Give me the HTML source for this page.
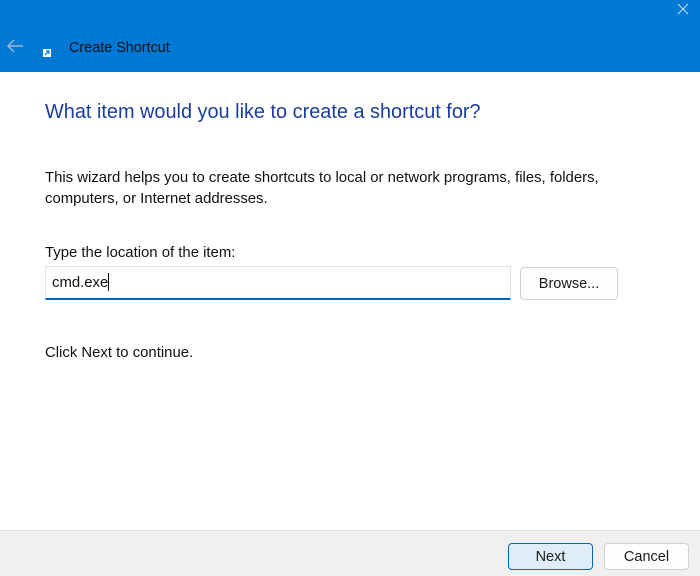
<!DOCTYPE html>
<html><head><style>
body{margin:0;width:700px;height:575px;position:relative;overflow:hidden;background:#fff;font-family:"Liberation Sans",sans-serif;}
.hdr{position:absolute;left:0;top:0;width:700px;height:72px;background:#0078d4;}
.t{position:absolute;white-space:nowrap;}
.foot{position:absolute;left:0;top:530px;width:700px;height:45px;background:#f0f0f0;border-top:1px solid #dfdfdf;}
.btn{position:absolute;box-sizing:border-box;border:1px solid #d0d0d0;border-radius:4px;background:#fdfdfd;font-size:14.5px;text-align:center;color:#1a1a1a;}
</style></head><body>
<div class="hdr">
<svg style="position:absolute;left:676px;top:2px" width="14" height="14"><path d="M2 2L12 12M12 2L2 12" stroke="#cfe3f5" stroke-width="1"/></svg>
<svg style="position:absolute;left:6px;top:38px" width="18" height="16"><path d="M17 8H2M8 2L2 8L8 14" stroke="#9ab7d3" stroke-width="1.5" fill="none"/></svg>
<div style="position:absolute;left:43px;top:49px;width:8px;height:8px;background:#fff;"><svg width="8" height="8" style="position:absolute"><path d="M2 6L6 2M3 2H6V5" stroke="#0078d4" stroke-width="1.2" fill="none"/></svg></div>
<div class="t" style="left:69px;top:40px;font-size:14.4px;color:#111;">Create Shortcut</div>
</div>
<div class="t" style="left:45px;top:101px;font-size:19.9px;color:#1b3e9a;">What item would you like to create a shortcut for?</div>
<div class="t" style="left:45px;top:168px;font-size:14.9px;color:#111;line-height:21px;">This wizard helps you to create shortcuts to local or network programs, files, folders,<br>computers, or Internet addresses.</div>
<div class="t" style="left:45px;top:245px;font-size:14.9px;color:#111;">Type the location of the item:</div>
<div style="position:absolute;left:45px;top:266px;width:466px;height:34px;box-sizing:border-box;border:1px solid #e3e3e3;border-bottom:2px solid #0067c0;"></div>
<div class="t" style="left:52px;top:273px;font-size:14.9px;color:#111;">cmd.exe<span style="display:inline-block;width:1px;height:18px;background:#000;vertical-align:-4px;"></span></div>
<div class="btn" style="left:520px;top:267px;width:98px;height:33px;line-height:33px;">Browse...</div>
<div class="t" style="left:45px;top:345px;font-size:14.9px;color:#111;">Click Next to continue.</div>
<div class="foot"></div>
<div class="btn" style="left:508px;top:543px;width:85px;height:27px;line-height:27px;background:#e0ecf8;border-color:#0067c0;">Next</div>
<div class="btn" style="left:604px;top:543px;width:85px;height:27px;line-height:27px;">Cancel</div>
</body></html>
